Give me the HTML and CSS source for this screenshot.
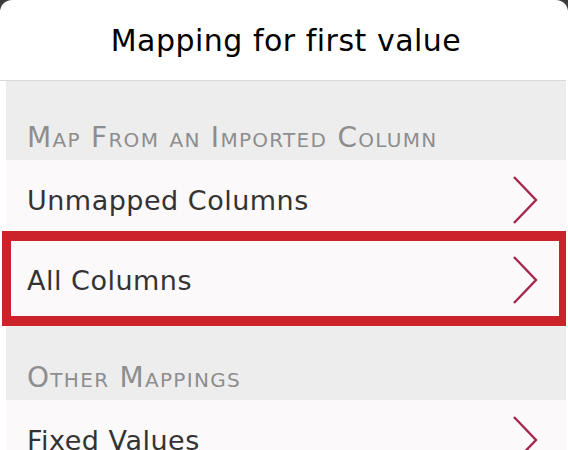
FILE: index.html
```html
<!DOCTYPE html>
<html lang="en">
<head>
  <meta charset="UTF-8" />
  <title>Mapping for first value</title>
  <link rel="stylesheet" href="styles.css">
</head>
<body>
  <div class="sheet">
    <div class="sheet-header">
      <h1>Mapping for first value</h1>
    </div>

    <div class="sheet-body">
      <div class="section-label">Map From an Imported Column</div>
      <div class="row">
        <span>Unmapped Columns</span>
        <svg class="chevron" width="26" height="50" viewBox="0 0 26 50"><polyline points="2,2 24,25 2,48" /></svg>
      </div>
      <div class="row row-selected">
        <span>All Columns</span>
        <svg class="chevron" width="26" height="50" viewBox="0 0 26 50"><polyline points="2,2 24,25 2,48" /></svg>
      </div>

      <div class="section-label">Other Mappings</div>
      <div class="row">
        <span>Fixed Values</span>
        <svg class="chevron" width="26" height="50" viewBox="0 0 26 50"><polyline points="2,2 24,25 2,48" /></svg>
      </div>
    </div>
  </div>
</body>
</html>
```

FILE: styles.css
```css
html, body {
  margin: 0;
  padding: 0;
  background: #3c3c3c;
  overflow: hidden;
}
body {
  font-family: "DejaVu Sans", "Open Sans", sans-serif;
}
.sheet {
  box-sizing: border-box;
  width: 568px;
  height: 450px;
  overflow: hidden;
  background: #fff;
  border-radius: 12px 12px 0 0;
  padding: 0 2px 0 6px;
}
.sheet-header {
  height: 80px;
  display: flex;
  align-items: center;
  justify-content: center;
  border-bottom: 1px solid #d9d9d9;
  margin-left: -6px;
  padding-left: 6px;
}
h1 {
  margin: 0;
  font-size: 30px;
  font-weight: normal;
  letter-spacing: 0.5px;
  color: #000;
}
.sheet-body {
  background: #ededed;
}
.section-label {
  height: 79px;
  box-sizing: border-box;
  display: flex;
  align-items: flex-end;
  padding: 0 0 6px 21px;
  font-size: 28px;
  letter-spacing: 1.3px;
  font-variant: small-caps;
  color: #8e8e8e;
}
.row {
  height: 80px;
  display: flex;
  align-items: center;
  justify-content: space-between;
  padding: 0 28px 0 21px;
  background: #fbf9fa;
  font-size: 27px;
  letter-spacing: 0.5px;
  color: #333;
  position: relative;
}
.row + .section-label {
  height: 80px;
}
.chevron polyline {
  fill: none;
  stroke: #a5284b;
  stroke-width: 2.4;
}
/* highlight box drawn over the selected row */
.row-selected::after {
  content: "";
  position: absolute;
  top: -9px;
  bottom: -6px;
  left: -4px;
  right: 0;
  border: 10px solid #cc2229;
  border-left-width: 9px;
  border-right-width: 7px;
}
```
